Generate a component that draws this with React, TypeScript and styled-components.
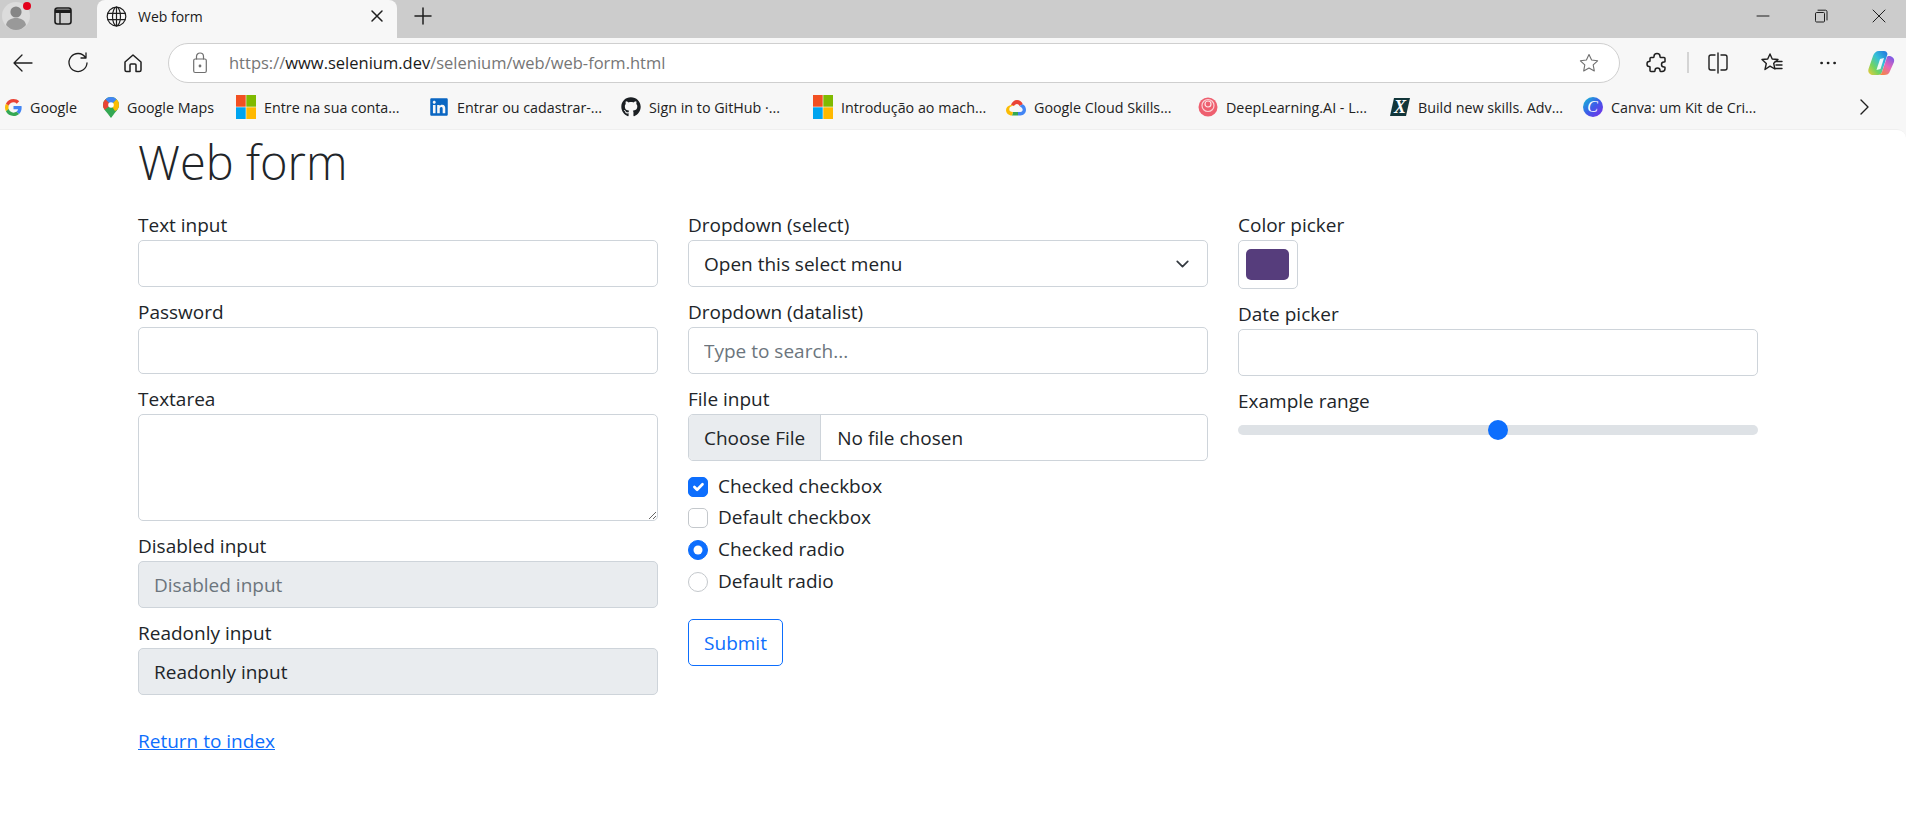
import styled, { createGlobalStyle } from 'styled-components'
import { FaGithub, FaLinkedin } from 'react-icons/fa'

const FONT = `'Open Sans', 'Noto Sans', Arial, sans-serif`

const GlobalStyle = createGlobalStyle`
	html, body {
		margin: 0;
		height: 100%;
		background: #f7f7f7;
		font-family: ${FONT};
	}
	* {
		box-sizing: border-box;
	}
`

const Screen = styled.div`
	display: flex;
	flex-direction: column;
	width: 1906px;
	height: 832px;
	overflow: hidden;
	background: #f7f7f7;
	color: #1c1c1c;
`

/* browser chrome */

const TitleBar = styled.div`
	display: flex;
	align-items: stretch;
	height: 38px;
	background: #cccccc;
	svg {
		display: block;
	}
	& > div {
		padding-bottom: 6px;
	}
`

const ProfileButton = styled.div`
	position: relative;
	width: 32px;
	display: flex;
	align-items: center;
	justify-content: center;
`

const Dot = styled.span`
	position: absolute;
	top: 2px;
	right: 1px;
	width: 8px;
	height: 8px;
	border-radius: 50%;
	background: #e3001b;
`

const TabAction = styled.div`
	width: 65px;
	padding-right: 3px;
	display: flex;
	align-items: center;
	justify-content: center;
`

const Tab = styled.div`
	display: flex;
	align-items: center;
	width: 300px;
	padding: 0 13px 0 9px;
	background: #f7f7f7;
	border-radius: 8px 8px 0 0;
	font-size: 14px;
	color: #1a1a1a;
`

const TabTitle = styled.span`
	margin-left: 11px;
	flex: 1;
`

const NewTab = styled.div`
	width: 52px;
	display: flex;
	align-items: center;
	justify-content: center;
`

const WindowControls = styled.div`
	margin-left: auto;
	display: flex;
	align-items: center;
	padding-right: 20px;
	gap: 44px;
`

const Toolbar = styled.div`
	display: flex;
	align-items: center;
	height: 48px;
	padding: 1px 0 0 12px;
	svg {
		display: block;
	}
`

const NavButtons = styled.div`
	display: flex;
	align-items: center;
	flex: none;
	gap: 33px;
	width: 156px;
`

const AddressBar = styled.div`
	display: flex;
	align-items: center;
	flex: none;
	width: 1452px;
	height: 40px;
	padding: 0 20px 0 24px;
	background: #ffffff;
	border: 1px solid #cfcfcf;
	border-radius: 20px;
`

const Url = styled.div`
	margin-left: 22px;
	flex: 1;
	font-size: 16.5px;
	color: #767676;
	b {
		font-weight: 400;
		color: #1a1a1a;
	}
`

const ToolbarActions = styled.div`
	display: flex;
	align-items: center;
	flex: 1;
	margin-left: 25px;
`

const ActionSlot = styled.div<{ $w: number }>`
	display: flex;
	align-items: center;
	justify-content: center;
	flex: none;
	width: ${(p) => p.$w}px;
`

const CopilotSlot = styled(ActionSlot)`
	margin-left: auto;
`

const ToolbarDivider = styled.div`
	width: 2px;
	height: 21px;
	background: #d4d4d4;
`

const BookmarksBar = styled.div`
	display: flex;
	align-items: center;
	height: 43px;
	padding: 0 33px 1px 5px;
`

const Bookmark = styled.div<{ $w: number }>`
	display: flex;
	align-items: center;
	gap: 8px;
	width: ${(p) => p.$w}px;
	flex: none;
	font-size: 14.3px;
	color: #222;
	white-space: nowrap;
	svg {
		flex: none;
		display: block;
	}
`

const BookmarkMore = styled.div`
	margin-left: auto;
	svg {
		display: block;
	}
`

/* page */

const Page = styled.main`
	flex: 1;
	padding: 0 148px 0 138px;
	background: #ffffff;
	border-top: 1px solid #efefef;
	border-radius: 0 9px 0 0;
	color: #212529;
	font-size: 19px;
	line-height: 29px;
`

const Heading = styled.h1`
	margin: 0;
	height: 81px;
	font-size: 47px;
	font-weight: 300;
	line-height: 65px;
`

const Columns = styled.form`
	display: grid;
	grid-template-columns: repeat(3, 520px);
	gap: 30px;
`

const Column = styled.div`
	display: flex;
	flex-direction: column;
`

const Field = styled.label`
	display: block;
	margin-bottom: 11px;
`

const controlStyles = `
	display: block;
	width: 100%;
	height: 47px;
	padding: 0 15px;
	border: 1px solid #ced4da;
	border-radius: 5px;
	background-color: #ffffff;
	color: #212529;
	font-family: ${FONT};
	font-size: 19px;
	outline: none;
	&::placeholder {
		color: #6c757d;
		opacity: 1;
	}
`

const TextInput = styled.input<{ $filled?: boolean }>`
	${controlStyles}
	background-color: ${(p) => (p.$filled ? '#e9ecef' : '#ffffff')};
`

const TextArea = styled.textarea`
	${controlStyles}
	height: 107px;
	padding-top: 8px;
	resize: vertical;
`

const Select = styled.select`
	${controlStyles}
	appearance: none;
	background-image: url("data:image/svg+xml,%3csvg xmlns='http://www.w3.org/2000/svg' viewBox='0 0 16 16'%3e%3cpath fill='none' stroke='%23343a40' stroke-linecap='round' stroke-linejoin='round' stroke-width='2' d='m2 5 6 6 6-6'/%3e%3c/svg%3e");
	background-repeat: no-repeat;
	background-position: right 15px center;
	background-size: 19px 14px;
`

const FileInput = styled.input`
	${controlStyles}
	padding: 0 15px 0 0;
	line-height: 45px;
	overflow: hidden;
	&::file-selector-button {
		height: 45px;
		margin: 0 16px 0 0;
		padding: 0 15px;
		border: 0;
		border-right: 1px solid #ced4da;
		background: #e9ecef;
		color: #212529;
		font-family: ${FONT};
		font-size: 19px;
	}
`

const ColorInput = styled.input`
	display: block;
	width: 60px;
	height: 49px;
	padding: 8px 8px 8px 7px;
	border: 1px solid #ced4da;
	border-radius: 5px;
	background: #ffffff;
	&::-webkit-color-swatch-wrapper {
		padding: 0;
	}
	&::-webkit-color-swatch {
		border: 0;
		border-radius: 5px;
	}
`

const RangeInput = styled.input`
	display: block;
	width: 100%;
	height: 20px;
	margin: 4px 0 0;
	appearance: none;
	background: transparent;
	&::-webkit-slider-runnable-track {
		height: 10px;
		border-radius: 5px;
		background: #dee2e6;
	}
	&::-webkit-slider-thumb {
		appearance: none;
		width: 20px;
		height: 20px;
		margin-top: -5px;
		border-radius: 50%;
		background: #0d6efd;
	}
`

const CheckRow = styled.label<{ $top: number }>`
	display: flex;
	align-items: center;
	height: 29px;
	margin-top: ${(p) => p.$top}px;
`

const CheckBox = styled.input`
	flex: none;
	width: 20px;
	height: 20px;
	margin: 0 10px 0 0;
	appearance: none;
	border: 1px solid #c4c8cc;
	border-radius: ${(p) => (p.type === 'radio' ? '50%' : '5px')};
	background-color: #ffffff;
	background-position: center;
	background-repeat: no-repeat;
	background-size: contain;
	&:checked {
		border-color: #0d6efd;
		background-color: #0d6efd;
	}
	&[type='checkbox']:checked {
		background-image: url("data:image/svg+xml,%3csvg xmlns='http://www.w3.org/2000/svg' viewBox='0 0 20 20'%3e%3cpath fill='none' stroke='%23fff' stroke-linecap='round' stroke-linejoin='round' stroke-width='3' d='m6 10 3 3 6-6'/%3e%3c/svg%3e");
	}
	&[type='radio']:checked {
		background-image: url("data:image/svg+xml,%3csvg xmlns='http://www.w3.org/2000/svg' viewBox='-4 -4 8 8'%3e%3ccircle r='2' fill='%23fff'/%3e%3c/svg%3e");
	}
`

const SubmitButton = styled.button`
	align-self: flex-start;
	width: 95px;
	height: 47px;
	margin-top: 23px;
	padding: 0;
	border: 1px solid #0d6efd;
	border-radius: 5px;
	background: transparent;
	color: #0d6efd;
	font-family: ${FONT};
	font-size: 19px;
`

const ReturnLink = styled.a`
	display: inline-block;
	margin-top: 21px;
	color: #0d6efd;
	text-decoration: underline;
`

/* icons */

const line = { fill: 'none', stroke: '#1f1f1f', strokeWidth: 1.4, strokeLinecap: 'round', strokeLinejoin: 'round' } as const

function Profile() {
	return (
		<svg width="30" height="30" viewBox="0 0 30 30">
			<circle cx="15" cy="15" r="14" fill="#dcdcdc" />
			<circle cx="15" cy="11" r="5.6" fill="#858585" />
			<path d="M5 24c1-5 5-7 10-7s9 2 10 7c-2.500 3-6 5-10 5s-7.500-2-10-5z" fill="#999" />
		</svg>
	)
}

function TabsIcon() {
	return (
		<svg width="20" height="20" viewBox="0 0 20 20">
			<rect x="2" y="2" width="16" height="16" rx="2.500" fill="none" stroke="#1c1c1c" strokeWidth="1.600" />
			<path d="M2 3.500h16v3.500H2z" fill="#1c1c1c" />
			<path d="M7 7v11" stroke="#1c1c1c" strokeWidth="1.400" />
		</svg>
	)
}

function Globe() {
	return (
		<svg width="21" height="21" viewBox="0 0 21 21" {...line} strokeWidth={1.200}>
			<circle cx="10.500" cy="10.500" r="9.300" />
			<ellipse cx="10.500" cy="10.500" rx="4" ry="9.300" />
			<path d="M2 7.300h17M2 13.700h17M10.500 1.200v18.600" />
		</svg>
	)
}

function Glyph({ d, size = 16, w = 1.300, color = '#1f1f1f' }: { d: string; size?: number; w?: number; color?: string }) {
	return (
		<svg width={size} height={size} viewBox={`0 0 ${size} ${size}`} {...line} stroke={color} strokeWidth={w}>
			<path d={d} />
		</svg>
	)
}

function Copilot() {
	return (
		<svg width="28" height="26" viewBox="0 0 28 26">
			<defs>
				<linearGradient id="cpA" x1="1" y1="0" x2="0" y2="1">
					<stop offset="0" stopColor="#1f6fe0" />
					<stop offset="0.4" stopColor="#35c1d8" />
					<stop offset="0.7" stopColor="#74d45e" />
					<stop offset="1" stopColor="#f5c93a" />
				</linearGradient>
				<linearGradient id="cpB" x1="0.8" y1="0" x2="0.2" y2="1">
					<stop offset="0" stopColor="#7a5ae8" />
					<stop offset="0.5" stopColor="#e766b6" />
					<stop offset="1" stopColor="#f58a3c" />
				</linearGradient>
			</defs>
			<path d="M12 1h5c2 0 3 1 3.500 3L15 22c-.5 2-2 3-4 3H6c-3 0-5.500-2.500-4.500-6L6 6c1-3 3-5 6-5z" fill="url(#cpA)" />
			<path d="M22 6c3 0 6 2.500 5 6l-4 9c-1 3-3 4-6 4h-6c2 0 3.500-1 4-3L20 7c.5-1 1-1 2-1z" fill="url(#cpB)" />
			<path d="M13 9l4-1-3.500 11-4 1z" fill="#fff" opacity="0.9" />
		</svg>
	)
}

function GoogleG() {
	return (
		<svg width="17" height="17" viewBox="0 0 48 48">
			<path fill="#EA4335" d="M24 9.500c3.540 0 6.710 1.220 9.210 3.600l6.850-6.850C35.900 2.380 30.470 0 24 0 14.620 0 6.510 5.380 2.560 13.220l7.980 6.190C12.430 13.720 17.740 9.500 24 9.500z" />
			<path fill="#4285F4" d="M46.980 24.550c0-1.570-.15-3.090-.38-4.550H24v9.020h12.940c-.58 2.960-2.260 5.480-4.780 7.180l7.730 6c4.510-4.180 7.090-10.360 7.090-17.650z" />
			<path fill="#FBBC05" d="M10.530 28.590c-.48-1.450-.76-2.990-.76-4.590s.27-3.140.76-4.590l-7.980-6.190C.92 16.460 0 20.120 0 24c0 3.880.92 7.540 2.560 10.780l7.970-6.190z" />
			<path fill="#34A853" d="M24 48c6.480 0 11.930-2.130 15.890-5.810l-7.730-6c-2.150 1.450-4.920 2.300-8.160 2.300-6.260 0-11.570-4.220-13.470-9.910l-7.980 6.190C6.510 42.620 14.620 48 24 48z" />
		</svg>
	)
}

function MapsPin() {
	return (
		<svg width="16" height="21" viewBox="0 0 16 21">
			<defs>
				<clipPath id="pinShape">
					<path d="M8 0a8 8 0 0 0-8 8c0 4 3 6 5 9 1.200 1.700 2.300 3 3 4 .7-1 1.800-2.300 3-4 2-3 5-5 5-9a8 8 0 0 0-8-8z" />
				</clipPath>
			</defs>
			<g clipPath="url(#pinShape)">
				<rect width="16" height="21" fill="#34a853" />
				<path d="M0 0h16L8 8z" fill="#4285f4" />
				<path d="M0 0l8 8-8 6z" fill="#ea4335" />
				<path d="M16 0 8 8l4 6 4-2z" fill="#fbbc04" />
			</g>
			<circle cx="8" cy="8" r="2.800" fill="#fff" />
		</svg>
	)
}

function Windows() {
	return (
		<svg width="20" height="24" viewBox="0 0 20 24">
			<rect width="9.700" height="11.700" fill="#f25022" />
			<rect x="10.300" width="9.700" height="11.700" fill="#7fba00" />
			<rect y="12.300" width="9.700" height="11.700" fill="#00a4ef" />
			<rect x="10.300" y="12.300" width="9.700" height="11.700" fill="#ffb900" />
		</svg>
	)
}

function Cloud() {
	return (
		<svg width="20" height="17" viewBox="0 0 20 17">
			<path d="M5 6c.8-3 3.300-5 6-5 2.700 0 5 1.700 5.800 4.200L13.500 7C13 5.700 12 5 11 5 9.500 5 8.500 6 8 7z" fill="#ea4335" />
			<path d="M16.800 5.200C18.800 6.300 20 8.500 20 10.800c0 3.200-2.400 5.700-5.500 5.700H12V13h2.500c1.300 0 2.200-1 2.200-2.200 0-1.500-1.400-2.600-3.200-3.800z" fill="#4285f4" />
			<path d="M12 13v3.500H6L7 13z" fill="#34a853" />
			<path d="M5 6l3 1c-2 0-4.700.3-4.700 3.500C3.300 12 4.500 13 7 13l-1 3.500c-3.500 0-6-2.500-6-5.500 0-2.500 2-4.500 5-5z" fill="#fbbc04" />
		</svg>
	)
}

function DeepLearning() {
	return (
		<svg width="20" height="20" viewBox="0 0 20 20">
			<circle cx="10" cy="10" r="9.500" fill="#ee5f6f" />
			<circle cx="10" cy="8.500" r="6" fill="none" stroke="#fbd0d5" strokeWidth="1.200" />
			<circle cx="10" cy="7" r="3" fill="none" stroke="#fde3e6" strokeWidth="1.200" />
		</svg>
	)
}

function XLogo() {
	return (
		<svg width="20" height="18" viewBox="0 0 20 18">
			<path d="M4 0h16l-4 18H0z" fill="#12363a" />
			<text x="10" y="15" textAnchor="middle" fontFamily="'Liberation Serif', serif" fontWeight="700" fontStyle="italic" fontSize="18" fill="#fff">X</text>
		</svg>
	)
}

function Canva() {
	return (
		<svg width="20" height="20" viewBox="0 0 20 20">
			<defs>
				<linearGradient id="canvaBg" x1="0" y1="0" x2="1" y2="1">
					<stop offset="0" stopColor="#10c4d4" />
					<stop offset="0.5" stopColor="#3d5ce8" />
					<stop offset="1" stopColor="#7d2ae8" />
				</linearGradient>
			</defs>
			<circle cx="10" cy="10" r="10" fill="url(#canvaBg)" />
			<text x="9.500" y="15" textAnchor="middle" fontFamily="'Liberation Serif', serif" fontStyle="italic" fontSize="16" fill="#fff">C</text>
		</svg>
	)
}

const BOOKMARKS = [
	{ w: 98, icon: <GoogleG />, label: 'Google' },
	{ w: 133, icon: <MapsPin />, label: 'Google Maps' },
	{ w: 193, icon: <Windows />, label: 'Entre na sua conta...' },
	{ w: 192, icon: <FaLinkedin size={20} color="#0a66c2" />, label: 'Entrar ou cadastrar-...' },
	{ w: 192, icon: <FaGithub size={20} color="#1b1f23" />, label: 'Sign in to GitHub ·...' },
	{ w: 193, icon: <Windows />, label: 'Introdução ao mach...' },
	{ w: 192, icon: <Cloud />, label: 'Google Cloud Skills...' },
	{ w: 192, icon: <DeepLearning />, label: 'DeepLearning.AI - L...' },
	{ w: 193, icon: <XLogo />, label: 'Build new skills. Adv...' },
	{ w: 192, icon: <Canva />, label: 'Canva: um Kit de Cri...' },
]

export default function App() {
	return (
		<Screen>
			<GlobalStyle />
			<TitleBar>
				<ProfileButton>
					<Profile />
					<Dot />
				</ProfileButton>
				<TabAction>
					<TabsIcon />
				</TabAction>
				<Tab>
					<Globe />
					<TabTitle>Web form</TabTitle>
					<Glyph size={14} d="M2 2l10 10M12 2 2 12" w={1.500} />
				</Tab>
				<NewTab>
					<Glyph size={18} d="M9 1v16M1 9h16" w={1.500} />
				</NewTab>
				<WindowControls>
					<Glyph size={14} d="M1 7h12" w={1} />
					<Glyph size={14} d="M1.500 4.500a1 1 0 0 1 1-1h7a1 1 0 0 1 1 1v7.500a1 1 0 0 1-1 1h-7a1 1 0 0 1-1-1zM4 1.200h7.500a1.500 1.500 0 0 1 1.500 1.500V11" w={1} />
					<Glyph size={14} d="M1 1l12 12M13 1 1 13" w={1} />
				</WindowControls>
			</TitleBar>
			<Toolbar>
				<NavButtons>
					<Glyph size={22} d="M2 11h18M10 3l-8 8 8 8" />
					<Glyph size={22} d="M18.500 5.500A9 9 0 1 0 20 11M19 1v5h-5" />
					<Glyph size={22} d="M3 10 11 3l8 7v8a1.500 1.500 0 0 1-1.500 1.500H14V13a1 1 0 0 0-1-1H9a1 1 0 0 0-1 1v6.500H4.500A1.500 1.500 0 0 1 3 18z" w={1.500} />
				</NavButtons>
				<AddressBar>
					<svg width="14" height="22" viewBox="0 0 14 22" {...line} stroke="#6f6f6f" strokeWidth={1.200}>
						<rect x="0.700" y="7" width="12.600" height="13.500" rx="1.500" />
						<path d="M3.500 7V4.500a3.500 3.500 0 0 1 7 0V7" />
						<circle cx="7" cy="14" r="0.800" fill="#6f6f6f" />
					</svg>
					<Url>
						https://<b>www.selenium.dev</b>/selenium/web/web-form.html
					</Url>
					<Glyph size={20} color="#6f6f6f" d="M10 1.500l2.600 5.500 6 .8-4.400 4.100 1.100 6L10 15l-5.300 2.900 1.100-6L1.400 7.800l6-.8z" w={1.100} />
				</AddressBar>
				<ToolbarActions>
					<ActionSlot $w={24}>
						<Glyph size={22} d="M8 4.500C8 2.500 9.500 1.500 11 1.500s3 1 3 3c0 .5 0 1 .5 1H18a1 1 0 0 1 1 1v3c0 .5-.5.500-1 .5-1.500 0-2.500 1-2.500 2.500s1 2.500 2.500 2.500c.5 0 1 0 1 .5v1c0 2-1 3-3 3h-1.500c-.5 0-.5-.5-.5-1 0-1.500-1-2.500-2.500-2.500S9 17 9 18.500c0 .5 0 1-.5 1H5a1 1 0 0 1-1-1V15c0-.5-.5-.5-1-.5-1 0-2-1-2-2.500s1-2.500 2-2.500c.5 0 1 0 1-.5V6.500a1 1 0 0 1 1-1h2.500c.5 0 .5-.5.500-1z" w={1.500} />
					</ActionSlot>
					<ActionSlot $w={38}>
						<ToolbarDivider />
					</ActionSlot>
					<ActionSlot $w={22}>
						<Glyph size={22} d="M8 3H4a2 2 0 0 0-2 2v11a2 2 0 0 0 2 2h4M14 3h4a2 2 0 0 1 2 2v11a2 2 0 0 1-2 2h-4M11 1v20" w={1.400} />
					</ActionSlot>
					<ActionSlot $w={86}>
						<Glyph size={24} d="M10 3l2.200 5 5.800.500-4.300 3.800 1.200 5.700L10 15.200 5 18.500l1.300-6L2 8.500 7.700 8zM15 10.500h7M16 14h6M15 17.500h7" w={1.400} />
					</ActionSlot>
					<ActionSlot $w={26}>
						<Glyph size={20} d="M3.500 10h.2M10 10h.2M16.500 10h.2" w={2.600} />
					</ActionSlot>
					<CopilotSlot $w={50}>
						<Copilot />
					</CopilotSlot>
				</ToolbarActions>
			</Toolbar>
			<BookmarksBar>
				{BOOKMARKS.map((b) => (
					<Bookmark key={b.label} $w={b.w}>
						{b.icon}
						{b.label}
					</Bookmark>
				))}
				<BookmarkMore>
					<Glyph size={18} d="M6 2l7 7-7 7" w={1.400} />
				</BookmarkMore>
			</BookmarksBar>
			<Page>
				<Heading>Web form</Heading>
				<Columns>
					<Column>
						<Field>
							Text input
							<TextInput type="text" />
						</Field>
						<Field>
							Password
							<TextInput type="password" />
						</Field>
						<Field>
							Textarea
							<TextArea />
						</Field>
						<Field>
							Disabled input
							<TextInput $filled disabled placeholder="Disabled input" />
						</Field>
						<Field>
							Readonly input
							<TextInput $filled readOnly defaultValue="Readonly input" />
						</Field>
						<div>
							<ReturnLink href="#">Return to index</ReturnLink>
						</div>
					</Column>
					<Column>
						<Field>
							Dropdown (select)
							<Select defaultValue="">
								<option value="">Open this select menu</option>
								<option value="1">One</option>
								<option value="2">Two</option>
								<option value="3">Three</option>
							</Select>
						</Field>
						<Field>
							Dropdown (datalist)
							<TextInput placeholder="Type to search..." />
						</Field>
						<Field>
							File input
							<FileInput type="file" />
						</Field>
						<CheckRow $top={0}>
							<CheckBox type="checkbox" defaultChecked />
							Checked checkbox
						</CheckRow>
						<CheckRow $top={2}>
							<CheckBox type="checkbox" />
							Default checkbox
						</CheckRow>
						<CheckRow $top={3}>
							<CheckBox type="radio" name="my-radio" defaultChecked />
							Checked radio
						</CheckRow>
						<CheckRow $top={3}>
							<CheckBox type="radio" name="my-radio" />
							Default radio
						</CheckRow>
						<SubmitButton type="button">Submit</SubmitButton>
					</Column>
					<Column>
						<Field>
							Color picker
							<ColorInput type="color" defaultValue="#563d7c" />
						</Field>
						<Field>
							Date picker
							<TextInput type="text" />
						</Field>
						<Field>
							Example range
							<RangeInput type="range" min={0} max={10} defaultValue={5} />
						</Field>
					</Column>
				</Columns>
			</Page>
		</Screen>
	)
}
